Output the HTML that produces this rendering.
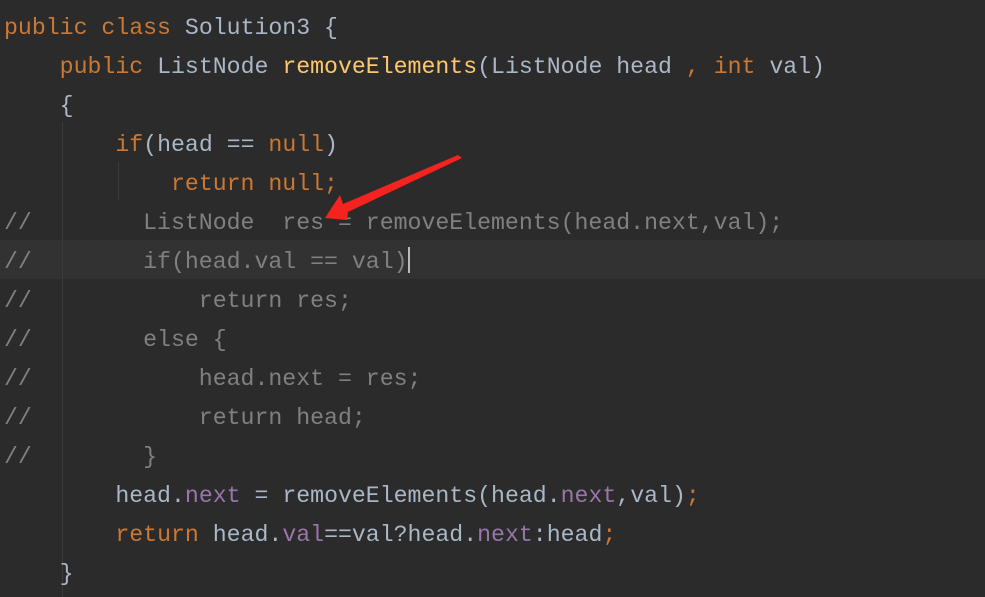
<!DOCTYPE html>
<html><head><meta charset="utf-8"><style>
html,body{margin:0;padding:0;width:985px;height:597px;overflow:hidden;background:#2b2b2b}
pre{margin:0;position:absolute;left:4px;top:9px;font-family:"Liberation Mono",monospace;font-size:23.2px;line-height:39px;color:#a9b7c6;white-space:pre}
.k{color:#cc7832}.m{color:#ffc66d}.c{color:#808080}.f{color:#9876aa}
.hl{position:absolute;left:0;top:240px;width:985px;height:39px;background:#323232}
.g{position:absolute;width:1px;background:#3b3b3b}
.cur{position:absolute;left:408px;top:247px;width:2px;height:26px;background:#bbb}
</style></head><body>
<div class="hl"></div>
<div class="g" style="left:62px;top:122px;height:475px"></div>
<div class="g" style="left:118px;top:162px;height:38px"></div>
<pre><span class="k">public class </span>Solution3 {
    <span class="k">public </span>ListNode <span class="m">removeElements</span>(ListNode head <span class="k">, int </span>val)
    {
        <span class="k">if</span>(head == <span class="k">null</span>)
            <span class="k">return null;</span>
<span class="c">//        ListNode  res = removeElements(head.next,val);</span>
<span class="c">//        if(head.val == val)</span>
<span class="c">//            return res;</span>
<span class="c">//        else {</span>
<span class="c">//            head.next = res;</span>
<span class="c">//            return head;</span>
<span class="c">//        }</span>
        head.<span class="f">next</span> = removeElements(head.<span class="f">next</span>,val)<span class="k">;</span>
        <span class="k">return </span>head.<span class="f">val</span>==val?head.<span class="f">next</span>:head<span class="k">;</span>
    }</pre>
<div class="cur"></div>
<svg style="position:absolute;left:0;top:0" width="985" height="597">
<polygon points="458,155 462,158 348,212 347,220 325,218 340,195 343,204" fill="#f5231f"/>
</svg>
</body></html>
